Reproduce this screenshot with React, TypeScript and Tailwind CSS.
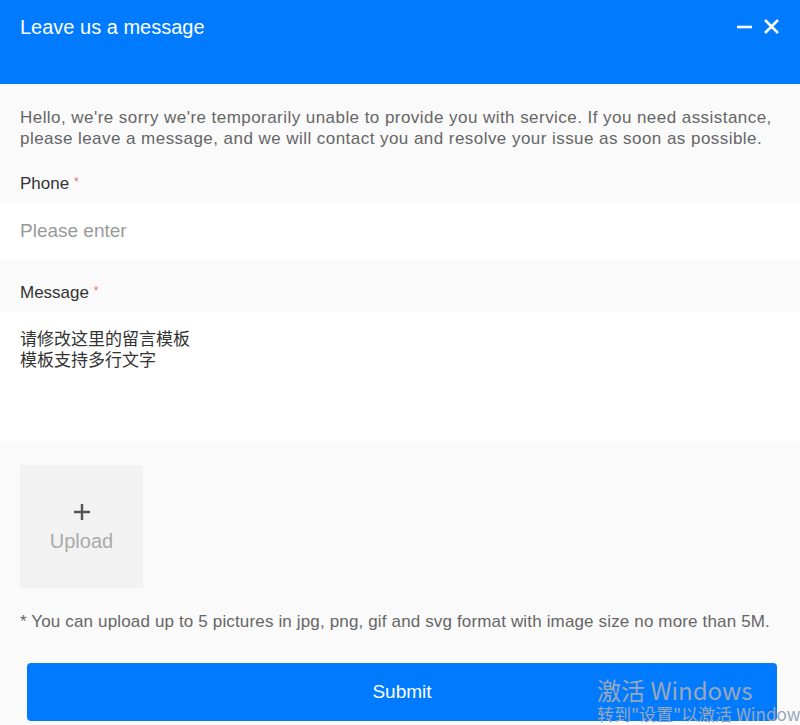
import React from "react";

const FONT = { fontFamily: '"Liberation Sans", Arial, "Noto Sans CJK SC", sans-serif' };

export default function App() {
  return (
    <div className="relative h-[725px] w-[800px] overflow-hidden bg-[#fafafa]" style={FONT}>
      <header className="flex h-[84px] items-start justify-between bg-[#007bff] px-5 pt-[15px] text-white">
        <h1 className="text-[20px] leading-6">Leave us a message</h1>
        <div className="flex items-center gap-[10px] pt-[3px]">
          <svg width="17" height="17" viewBox="0 0 17 17">
            <path d="M1 9h15" stroke="white" strokeWidth="2.6" />
          </svg>
          <svg width="17" height="17" viewBox="0 0 17 17">
            <path d="M2 2l13 13M15 2L2 15" stroke="white" strokeWidth="2.6" />
          </svg>
        </div>
      </header>

      <p className="px-5 pt-[23px] text-[17px] leading-[21px] tracking-[0.45px] text-[#666]">
        Hello, we're sorry we're temporarily unable to provide you with service. If you need assistance,
        please leave a message, and we will contact you and resolve your issue as soon as possible.
      </p>

      <Label text="Phone" className="pt-[25px]" />
      <div className="mt-[8px] flex h-14 items-center bg-white px-5 text-[19px] text-[#999]">Please enter</div>

      <Label text="Message" className="pt-[24px]" />
      <div className="mt-[8px] h-[129px] bg-white px-5 pt-[17px] text-[17px] leading-[21px] text-[#333]">
        <div>请修改这里的留言模板</div>
        <div>模板支持多行文字</div>
      </div>

      <div className="px-5 pt-6">
        <div className="flex h-[123px] w-[123px] flex-col items-center justify-center bg-[#f2f2f2]">
          <svg width="18" height="18" viewBox="0 0 18 18" className="mt-[2px]">
            <path d="M9 1v16M1 9h16" stroke="#555" strokeWidth="2.4" />
          </svg>
          <span className="mt-[8px] text-[20px] leading-6 text-[#aaa]">Upload</span>
        </div>
      </div>

      <p className="px-5 pt-[24px] text-[17px] leading-5 tracking-[0.15px] text-[#666]">
        * You can upload up to 5 pictures in jpg, png, gif and svg format with image size no more than 5M.
      </p>

      <div className="pl-[27px] pr-[23px] pt-[31px]">
        <button className="flex h-[58px] w-full items-center justify-center rounded-[4px] bg-[#007bff] text-[19px] text-white">
          Submit
        </button>
      </div>

      <div
        className="pointer-events-none absolute left-[597px] top-[676px] whitespace-nowrap text-[#9aa7b8]"
        style={{ fontFamily: '"Noto Sans CJK SC", sans-serif' }}
      >
        <div className="text-[24px] leading-7">激活 Windows</div>
        <div className="text-[17px] leading-5">转到"设置"以激活 Windows。</div>
      </div>
    </div>
  );
}

function Label({ text, className }: { text: string; className?: string }) {
  return (
    <div className={`px-5 text-[17px] leading-5 text-[#333] ${className ?? ""}`}>
      {text} <span className="relative -top-[3px] text-[12px] text-[#f56c6c]">*</span>
    </div>
  );
}
